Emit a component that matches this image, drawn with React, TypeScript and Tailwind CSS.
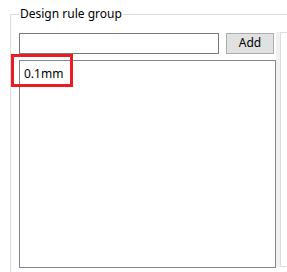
import React from "react";

export default function App() {
  const font = { fontFamily: '"Segoe UI", "Noto Sans", "Liberation Sans", sans-serif' };
  return (
    <div className="relative w-[287px] h-[272px] bg-white overflow-hidden pt-[14px] pl-[10px] text-[12px] text-black" style={font}>
      <div className="relative h-[300px] border-l border-t border-[#dcdcdc] pl-[8px] pt-[17px]">
        <div className="absolute left-[8px] top-[-9px] bg-white px-px leading-[16px]">Design rule group</div>
        <div className="flex items-start">
          <div className="flex flex-col w-[257px] mt-px">
            <div className="flex items-center">
              <div className="w-[200px] h-[21px] border border-[#7a7a7a] bg-white" />
              <button className="ml-[7px] w-[48px] h-[21px] border border-[#adadad] bg-[#e1e1e1] flex items-center justify-center leading-none pb-px">
                Add
              </button>
            </div>
            <div className="mt-[6px] w-[257px] h-[208px] border border-[#828790] bg-white pl-[4px] pt-[5px] leading-[16px]">
              0.1mm
            </div>
          </div>
          <div className="flex h-[235px]">
            <div className="w-[4px] bg-[#f0f0f0]" />
            <div className="w-[10px] border-l border-t border-b border-[#dcdcdc] bg-white" />
          </div>
        </div>
      </div>
      <div className="absolute left-[11px] top-[54px] w-[62px] h-[33px] border-[3px] border-[#ed1c24]" />
    </div>
  );
}
